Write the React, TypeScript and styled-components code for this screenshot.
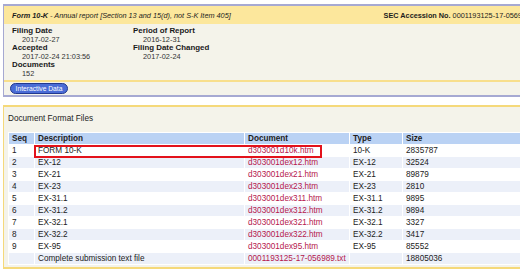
import React from 'react';
import styled, { createGlobalStyle } from 'styled-components';

const GlobalStyle = createGlobalStyle`
  html, body {
    margin: 0;
    padding: 0;
    background: #ffffff;
    overflow: hidden;
  }
  body {
    font-family: "Liberation Sans", Arial, sans-serif;
    color: #222222;
  }
`;

const Page = styled.div`
  width: 533px;
  padding: 4px 0 0 3px;
`;

const FormPanel = styled.div`
  border: 1px solid #a6a9d2;
  border-top-width: 2px;
  border-bottom-width: 2px;
  background: #f4f3ea;
`;

const FormHeader = styled.div`
  display: flex;
  justify-content: space-between;
  align-items: center;
  height: 18px;
  padding: 0 5px 0 8px;
  background: #fce79c;
  font-size: 7.3px;
  color: #1d1d1d;
  white-space: nowrap;
`;

const FormTitle = styled.div`
  font-style: italic;
  b {
    font-weight: bold;
  }
`;

const Accession = styled.div`
  b {
    font-weight: bold;
  }
`;

const InfoGrid = styled.div`
  display: grid;
  grid-template-columns: 121px 1fr;
  padding: 3px 0 2px 8px;
  height: 51px;
`;

const InfoGroup = styled.div`
  display: flex;
  flex-direction: column;
`;

const InfoHead = styled.div`
  font-weight: bold;
  font-size: 7.9px;
  line-height: 8.5px;
  color: #1a1a1a;
`;

const InfoValue = styled.div`
  font-size: 7.35px;
  line-height: 8.5px;
  padding-left: 10px;
  color: #333333;
`;

const Divider = styled.div`
  height: 2px;
  background: #f8df8c;
`;

const ButtonRow = styled.div`
  height: 13px;
  padding-left: 6px;
  display: flex;
  align-items: center;
`;

const Pill = styled.span`
  display: inline-flex;
  align-items: center;
  justify-content: center;
  height: 9px;
  width: 56px;
  border: 1px solid #22388f;
  border-radius: 6px;
  background: #4a6cd6;
  color: #ffffff;
  font-size: 6.7px;
`;

const FilesPanel = styled.div`
  margin-top: 8px;
  border: 1px solid #f5d97a;
  border-top-width: 2px;
  border-bottom-width: 2px;
  background: #f4f3ea;
  padding: 7px 0 2px 4px;
`;

const PanelTitle = styled.div`
  font-size: 8.2px;
  line-height: 10px;
  color: #222222;
  margin-bottom: 8px;
`;

const TableWrap = styled.div`
  position: relative;
`;

const Table = styled.table`
  border-collapse: separate;
  border-spacing: 1px;
  table-layout: fixed;
  width: 100%;
  background: #ffffff;
  font-size: 8.2px;
`;

const Th = styled.th<{ $w?: number }>`
  width: ${(p) => (p.$w ? `${p.$w}px` : 'auto')};
  height: 11px;
  padding: 0 0 0 3px;
  text-align: left;
  font-weight: bold;
  background: #bad2f4;
  color: #1d1d1d;
  line-height: 11px;
`;

const Tr = styled.tr<{ $alt: boolean }>`
  td {
    background: ${(p) => (p.$alt ? '#ecf0f9' : '#ffffff')};
  }
`;

const Td = styled.td`
  height: 11px;
  padding: 0 0 0 3px;
  line-height: 11px;
  white-space: nowrap;
  overflow: hidden;
  color: #222222;
`;

const DocLink = styled.a`
  color: #b5174d;
  text-decoration: none;
`;

const Highlight = styled.div`
  position: absolute;
  left: 26px;
  top: 13px;
  width: 284px;
  height: 9px;
  border: 2px solid #e3121b;
  pointer-events: none;
`;

const info = [
  [
    { head: 'Filing Date', value: '2017-02-27' },
    { head: 'Accepted', value: '2017-02-24 21:03:56' },
    { head: 'Documents', value: '152' },
  ],
  [
    { head: 'Period of Report', value: '2016-12-31' },
    { head: 'Filing Date Changed', value: '2017-02-24' },
  ],
];

const files = [
  { seq: '1', desc: 'FORM 10-K', doc: 'd303001d10k.htm', type: '10-K', size: '2835787' },
  { seq: '2', desc: 'EX-12', doc: 'd303001dex12.htm', type: 'EX-12', size: '32524' },
  { seq: '3', desc: 'EX-21', doc: 'd303001dex21.htm', type: 'EX-21', size: '89879' },
  { seq: '4', desc: 'EX-23', doc: 'd303001dex23.htm', type: 'EX-23', size: '2810' },
  { seq: '5', desc: 'EX-31.1', doc: 'd303001dex311.htm', type: 'EX-31.1', size: '9895' },
  { seq: '6', desc: 'EX-31.2', doc: 'd303001dex312.htm', type: 'EX-31.2', size: '9894' },
  { seq: '7', desc: 'EX-32.1', doc: 'd303001dex321.htm', type: 'EX-32.1', size: '3327' },
  { seq: '8', desc: 'EX-32.2', doc: 'd303001dex322.htm', type: 'EX-32.2', size: '3417' },
  { seq: '9', desc: 'EX-95', doc: 'd303001dex95.htm', type: 'EX-95', size: '85552' },
  { seq: '', desc: 'Complete submission text file', doc: '0001193125-17-056989.txt', type: '', size: '18805036' },
];

export default function App() {
  return (
    <Page>
      <GlobalStyle />
      <FormPanel>
        <FormHeader>
          <FormTitle>
            <b>Form 10-K</b> - Annual report [Section 13 and 15(d), not S-K Item 405]
          </FormTitle>
          <Accession>
            <b>SEC Accession No.</b> 0001193125-17-056989
          </Accession>
        </FormHeader>
        <InfoGrid>
          {info.map((col, i) => (
            <InfoGroup key={i}>
              {col.map((item) => (
                <React.Fragment key={item.head}>
                  <InfoHead>{item.head}</InfoHead>
                  <InfoValue>{item.value}</InfoValue>
                </React.Fragment>
              ))}
            </InfoGroup>
          ))}
        </InfoGrid>
        <Divider />
        <ButtonRow>
          <Pill>Interactive Data</Pill>
        </ButtonRow>
      </FormPanel>

      <FilesPanel>
        <PanelTitle>Document Format Files</PanelTitle>
        <TableWrap>
          <Table>
            <thead>
              <tr>
                <Th $w={22}>Seq</Th>
                <Th $w={206}>Description</Th>
                <Th $w={101}>Document</Th>
                <Th $w={49}>Type</Th>
                <Th>Size</Th>
              </tr>
            </thead>
            <tbody>
              {files.map((f, i) => (
                <Tr key={f.doc} $alt={i % 2 === 1}>
                  <Td>{f.seq}</Td>
                  <Td>{f.desc}</Td>
                  <Td>
                    <DocLink href="#">{f.doc}</DocLink>
                  </Td>
                  <Td>{f.type}</Td>
                  <Td>{f.size}</Td>
                </Tr>
              ))}
            </tbody>
          </Table>
          <Highlight />
        </TableWrap>
      </FilesPanel>
    </Page>
  );
}
